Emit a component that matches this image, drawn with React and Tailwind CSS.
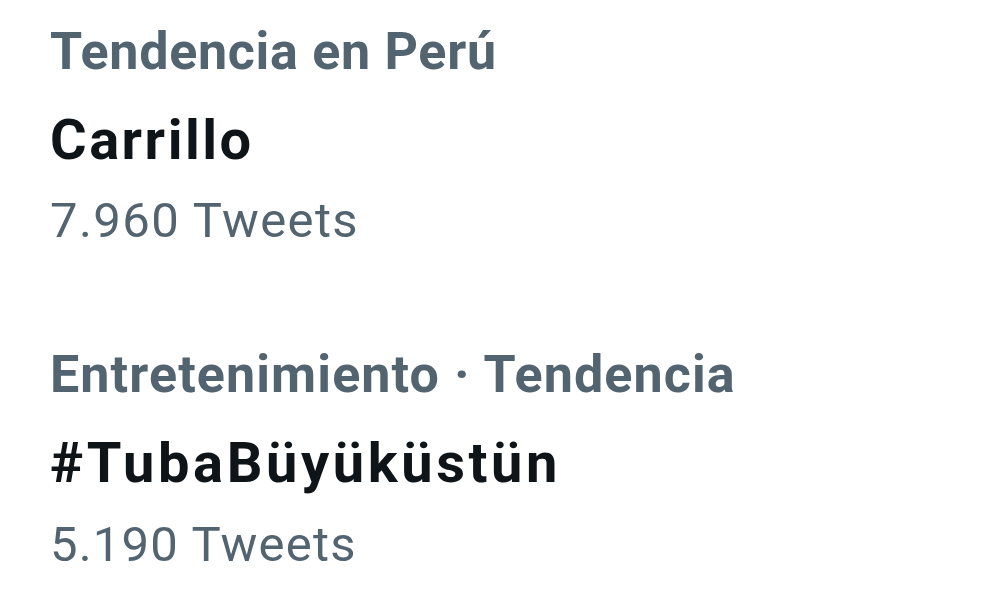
export default function App() {
  return (
    <div className="w-[983px] h-[611px] bg-white overflow-hidden pl-[50px] pt-[8px] font-['Roboto','Liberation_Sans',sans-serif]">
      <div className="flex flex-col">
        <div className="text-[52px] leading-[88px] font-bold tracking-[0.7px] text-[#536471]">Tendencia en Perú</div>
        <div className="text-[56px] leading-[88px] font-bold tracking-[2.5px] text-[#0f1419]">Carrillo</div>
        <div className="text-[49px] leading-[74px] tracking-[1.4px] text-[#536471]">7.960 Tweets</div>
      </div>
      <div className="flex flex-col mt-[73px]">
        <div className="text-[52px] leading-[88px] font-bold tracking-[1.1px] text-[#536471]">Entretenimiento · Tendencia</div>
        <div className="text-[56px] leading-[88px] font-bold tracking-[3.6px] text-[#0f1419]">#TubaBüyüküstün</div>
        <div className="text-[49px] leading-[76px] tracking-[1.2px] text-[#536471]">5.190 Tweets</div>
      </div>
    </div>
  );
}
